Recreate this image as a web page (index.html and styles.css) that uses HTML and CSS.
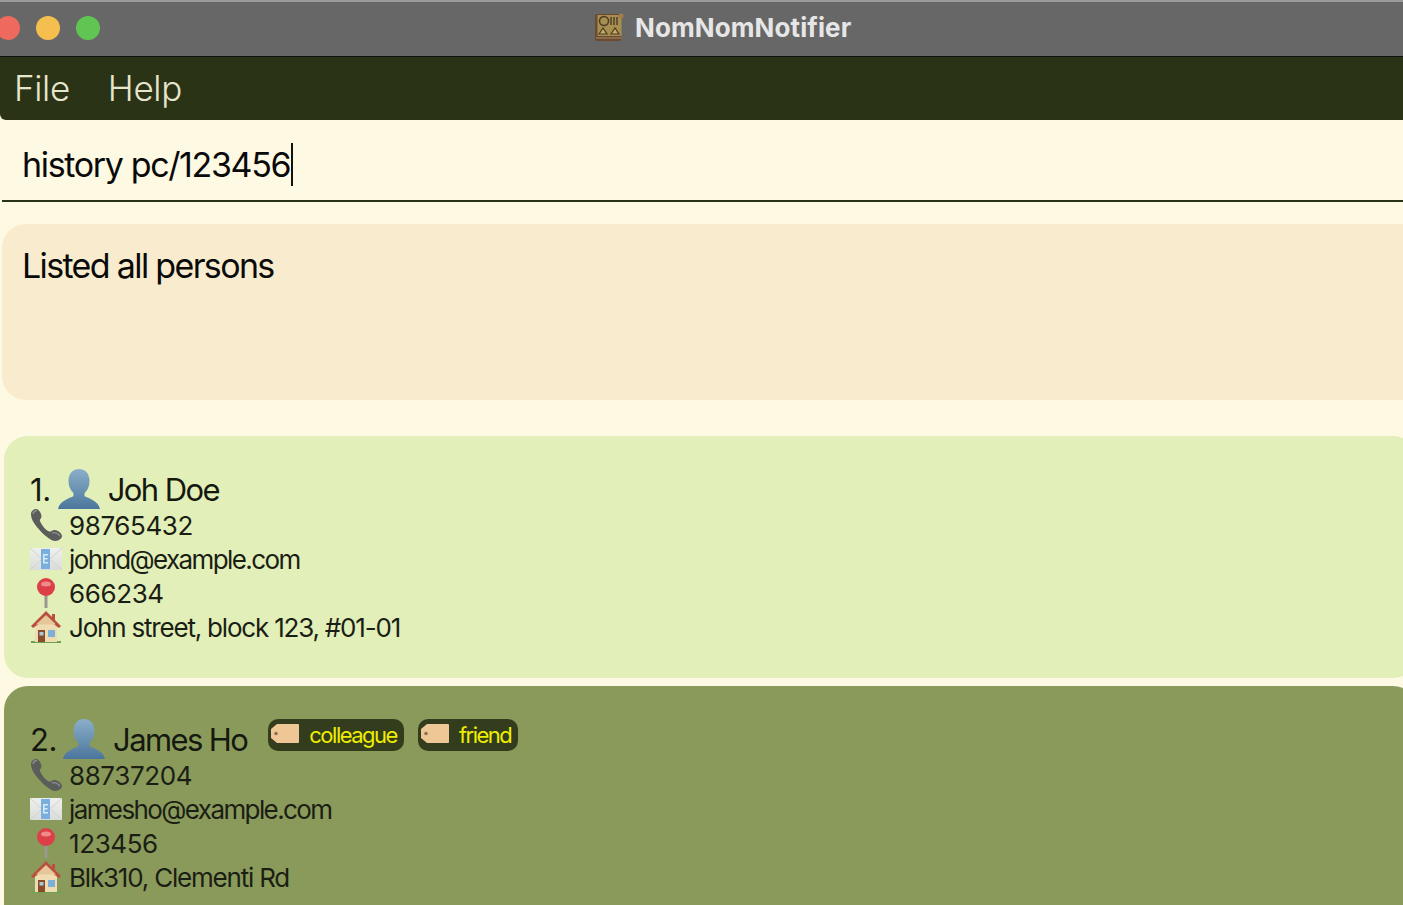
FILE: index.html
```html
<!DOCTYPE html>
<html lang="en">
<head>
<meta charset="utf-8">
<title>NomNomNotifier</title>
<link rel="stylesheet" href="styles.css">
</head>
<body>
<svg class="defs" width="0" height="0" aria-hidden="true">
  <defs>
    <linearGradient id="personGrad" x1="0" y1="0" x2="0" y2="1"><stop offset="0" stop-color="#8bafc9"/><stop offset="1" stop-color="#4b769c"/></linearGradient>
    <linearGradient id="mailGrad" x1="0" y1="0" x2="0" y2="1"><stop offset="0" stop-color="#f0f1ee"/><stop offset="1" stop-color="#d9dcd8"/></linearGradient>
    <symbol id="person" viewBox="0 0 42 40">
      <path d="M21 0c7 0 10.500 5.500 10.500 12 0 5-2 9.500-5 12v3c2 2 14 4 15.500 13H0c1.500-9 13.500-11 15.500-13v-3c-3-2.500-5-7-5-12C10.500 5.500 14 0 21 0z" fill="url(#personGrad)"/>
    </symbol>
    <symbol id="phone" viewBox="0 0 32 32">
      <path d="M1 5C1 2 4 0 6 0c2 0 4 2 5 5 .8 2.500.5 4-1 5.500-.5.500 0 2 1.500 4.500 2 3.500 4 5.500 6.500 7 1.500.8 2.500.8 3.500 0 2-1.500 4-1.500 6.500 0 2.500 1.500 4 3.500 4 5s-1.500 3.500-4 4.500c-2.500 1-5.500.5-9-2C14 26 8 20 4 14 2 11 1 8 1 5z" fill="#5a5d5a"/>
      <path d="M3 5c.5-2 2-3.500 4-3.500M22 24c2.500-1 6 .5 8 3" stroke="#8b8e8a" stroke-width="1.500" fill="none"/>
    </symbol>
    <symbol id="mail" viewBox="0 0 32 22">
      <rect x="0" y="0" width="32" height="22" rx="1" fill="url(#mailGrad)"/>
      <path d="M0 0l12 11M32 0L20 11M0 22l11-10M32 22L21 12" stroke="#cfd2d0" stroke-width="1" fill="none"/>
      <rect x="11" y="1" width="9" height="20" fill="#78afdf"/>
      <path d="M13 6h5v1.500h-3.500v2.500h3v1.500h-3V14h3.500v1.500h-5z" fill="#d9e9f6"/>
    </symbol>
    <symbol id="pin" viewBox="0 0 20 30">
      <rect x="8.500" y="14" width="3" height="16" fill="#989890"/>
      <circle cx="10" cy="9" r="9" fill="#dc3f47"/>
      <ellipse cx="10" cy="6" rx="5" ry="2.500" fill="#ee8a8a"/>
    </symbol>
    <symbol id="house" viewBox="0 0 32 32">
      <path d="M1 30h30v2H1z" fill="#6ea24f"/>
      <rect x="5" y="13" width="22" height="18" fill="#f0dcb2"/>
      <path d="M16 0L1 15l2 2L16 8l13 9 2-2-6-6V3h-3v3z" fill="#b9503f"/>
      <path d="M16 4L6 13.500h20z" fill="#e6c79a"/>
      <rect x="8" y="19" width="7" height="12" fill="#8a4a2c"/>
      <rect x="18" y="19" width="7" height="7" fill="#7cb0d8"/>
      <rect x="9.500" y="21" width="4" height="3.500" fill="#a9c8de"/>
    </symbol>
    <symbol id="tag" viewBox="0 0 28 19">
      <path d="M6 0h21a1 1 0 0 1 1 1v17a1 1 0 0 1-1 1H6l-6-5V5z" fill="#efc696"/>
      <circle cx="5" cy="9.500" r="1.800" fill="#8b7258"/>
    </symbol>
  </defs>
</svg>

<header class="titlebar">
  <div class="lights">
    <span class="light red"></span>
    <span class="light yellow"></span>
    <span class="light green"></span>
  </div>
  <div class="title">
    <svg class="app-icon" viewBox="0 0 30 30" width="30" height="30" aria-hidden="true">
      <rect x="1" y="2" width="26" height="27" rx="1.500" fill="#6c4a32"/>
      <rect x="3.500" y="3" width="24" height="21" fill="#a78f4f"/>
      <circle cx="10" cy="9" r="4.500" fill="none" stroke="#4a3a28" stroke-width="1.500"/>
      <path d="M17 5v8M20 5v8M23 5v8" stroke="#4a3a28" stroke-width="1.400"/>
      <path d="M5 22l4-6 4 6zM17 22l4-6 4 6z" fill="#c4ad66" stroke="#4a3a28" stroke-width="1.200"/>
      <circle cx="27" cy="4" r="2.500" fill="#a67b4e"/>
      <rect x="2" y="25" width="26" height="2" fill="#8a6a4a"/>
    </svg>
    <span class="title-text">NomNomNotifier</span>
  </div>
</header>

<nav class="menubar">
  <span class="menu-item">File</span>
  <span class="menu-item">Help</span>
</nav>

<section class="command">
  <span class="command-text">history pc/123456</span><span class="caret"></span>
</section>

<section class="result">Listed all persons</section>

<main class="list">
  <article class="card card-light">
    <div class="name-row">
      <span class="name-index">1.</span>
      <svg class="ico-person"><use href="#person"/></svg>
      <span class="name">Joh Doe</span>
    </div>
    <div class="row row-num"><svg class="ico ico-phone"><use href="#phone"/></svg><span>98765432</span></div>
    <div class="row row-email"><svg class="ico ico-mail"><use href="#mail"/></svg><span>johnd@example.com</span></div>
    <div class="row row-num"><svg class="ico ico-pin"><use href="#pin"/></svg><span>666234</span></div>
    <div class="row row-address"><svg class="ico ico-house"><use href="#house"/></svg><span>John street, block 123, #01-01</span></div>
  </article>

  <article class="card card-dark">
    <div class="name-row">
      <span class="name-index">2.</span>
      <svg class="ico-person"><use href="#person"/></svg>
      <span class="name">James Ho</span>
      <span class="tags">
        <span class="tag"><svg class="ico-tag"><use href="#tag"/></svg>colleague</span>
        <span class="tag"><svg class="ico-tag"><use href="#tag"/></svg>friend</span>
      </span>
    </div>
    <div class="row row-num"><svg class="ico ico-phone"><use href="#phone"/></svg><span>88737204</span></div>
    <div class="row row-email"><svg class="ico ico-mail"><use href="#mail"/></svg><span>jamesho@example.com</span></div>
    <div class="row row-num"><svg class="ico ico-pin"><use href="#pin"/></svg><span>123456</span></div>
    <div class="row row-address"><svg class="ico ico-house"><use href="#house"/></svg><span>Blk310, Clementi Rd</span></div>
  </article>
</main>
</body>
</html>
```

FILE: styles.css
```css
* { box-sizing: border-box; }

html, body {
  margin: 0;
  height: 100%;
  overflow: hidden;
}

body {
  background: #fef9e2;
  color: #15180f;
  font-family: "Inter", "Liberation Sans", sans-serif;
  -webkit-font-smoothing: antialiased;
}

.defs { display: block; height: 0; }

.titlebar {
  height: 57px;
  background: #676767;
  border-top: 2px solid #9a9a9a;
  border-bottom: 1px solid #111;
  display: flex;
  align-items: center;
}

.lights {
  display: flex;
  gap: 16px;
  margin: -2px 0 0 -4px;
}

.light {
  width: 24px;
  height: 24px;
  border-radius: 50%;
}
.red { background: #ee6a5f; }
.yellow { background: #f5bf4f; }
.green { background: #61c554; }

.title {
  display: flex;
  align-items: center;
  gap: 11px;
  margin: -4px 0 0 494px;
}

.app-icon { filter: blur(0.4px); }

.title-text {
  color: #e6e6e6;
  font-size: 26px;
  font-weight: 700;
  letter-spacing: 0.1px;
}

.menubar {
  height: 63px;
  background: #2a3316;
  border-bottom-left-radius: 6px;
  display: flex;
  align-items: center;
  gap: 38px;
  padding: 0 14px 2px;
}

.menu-item {
  color: #e8e5cd;
  font-size: 35px;
  font-weight: 300;
  letter-spacing: -0.35px;
}

.command {
  height: 82px;
  margin-left: 2px;
  border-bottom: 2px solid #2a3316;
  padding: 8px 0 0 20px;
  display: flex;
  align-items: center;
  color: #0a0a0a;
  font-size: 34px;
  letter-spacing: -1.35px;
}

.caret {
  width: 2px;
  height: 43px;
  background: #111;
  margin-left: 1px;
}

.result {
  height: 176px;
  margin: 22px -30px 0 2px;
  padding: 20px;
  background: #f9ecce;
  border-radius: 24px;
  color: #0a0a0a;
  font-size: 34px;
  letter-spacing: -1.65px;
  line-height: 44px;
}

.list {
  margin: 36px -14px 0 4px;
  display: flex;
  flex-direction: column;
  gap: 8px;
}

.card {
  height: 242px;
  border-radius: 24px;
  padding: 34px 26px 0;
  flex: none;
}
.card-light { background: #e2efb9; }
.card-dark { background: #8a9a5b; }

.name-row {
  height: 38px;
  display: flex;
  align-items: center;
  font-size: 31px;
  letter-spacing: -1.6px;
  color: #15180f;
}

.name-index { letter-spacing: -0.4px; }

.ico-person {
  width: 42px;
  height: 40px;
  margin: 0 8px 0 7px;
  flex: none;
  filter: blur(0.5px);
}
.card-dark .ico-person { margin: 0 8px 0 6px; }

.tags {
  display: flex;
  gap: 14px;
  margin: -8px 0 0 21px;
}

.tag {
  display: flex;
  align-items: center;
  height: 32px;
  padding: 0 7px 0 3px;
  background: #333d1e;
  border-radius: 10px;
  color: #eeee00;
  font-size: 22px;
  letter-spacing: -1.5px;
}

.ico-tag {
  width: 28px;
  height: 19px;
  margin: -4px 10px 0 0;
  filter: blur(0.4px);
}

.row {
  height: 34px;
  display: flex;
  align-items: center;
  font-size: 26px;
  color: #1b1e14;
}
.row-num { letter-spacing: -0.4px; }
.row-email { letter-spacing: -1.6px; }
.row-address { letter-spacing: -1.2px; }

.ico {
  width: 32px;
  margin-right: 7px;
  flex: none;
  filter: blur(0.6px);
}
.ico-phone { height: 32px; }
.ico-mail { height: 22px; }
.ico-pin { height: 30px; }
.ico-house { height: 32px; }
```
